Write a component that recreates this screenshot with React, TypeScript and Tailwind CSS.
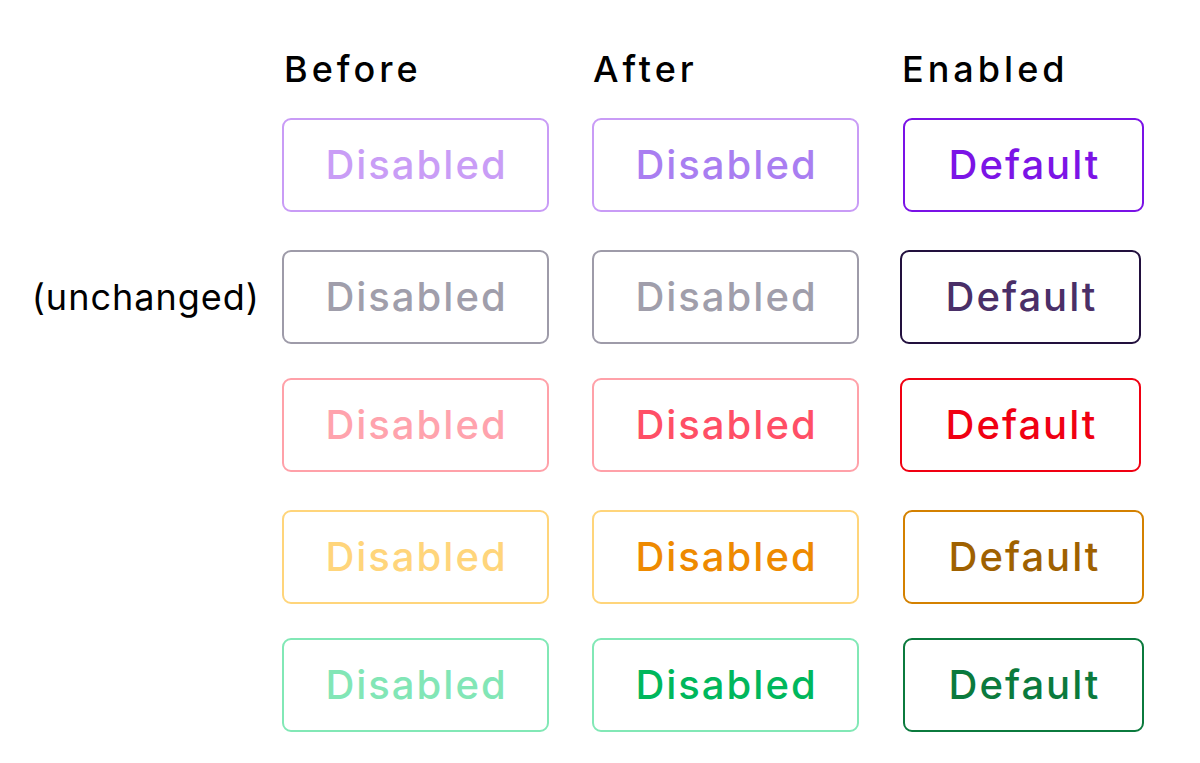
import React from 'react';

type Cell = { border: string; text: string; label: string; shift?: string };

interface Row {
    side?: string;
    top: string;
    cells: Cell[];
}

const rows: Row[] = [
    {
        top: 'mt-0',
        cells: [
            { border: 'border-[#c99cf6]', text: 'text-[#c99df6]', label: 'Disabled' },
            { border: 'border-[#c99cf6]', text: 'text-[#a97ef1]', label: 'Disabled' },
            { border: 'border-[#7a12e6]', text: 'text-[#7c14e6]', label: 'Default' },
        ],
    },
    {
        side: '(unchanged)',
        top: 'mt-[38px]',
        cells: [
            { border: 'border-[#9e9ba9]', text: 'text-[#a09eab]', label: 'Disabled' },
            { border: 'border-[#9e9ba9]', text: 'text-[#a09eab]', label: 'Disabled' },
            { border: 'border-[#22103e]', text: 'text-[#4a2f68]', label: 'Default', shift: '-ml-[3px]' },
        ],
    },
    {
        top: 'mt-[34px]',
        cells: [
            { border: 'border-[#ffa1a9]', text: 'text-[#ffa3ad]', label: 'Disabled' },
            { border: 'border-[#ffa1a9]', text: 'text-[#ff4f66]', label: 'Disabled' },
            { border: 'border-[#f00012]', text: 'text-[#f00012]', label: 'Default', shift: '-ml-[3px]' },
        ],
    },
    {
        top: 'mt-[38px]',
        cells: [
            { border: 'border-[#ffd57b]', text: 'text-[#ffd57b]', label: 'Disabled' },
            { border: 'border-[#ffd57b]', text: 'text-[#ee8a00]', label: 'Disabled' },
            { border: 'border-[#d48100]', text: 'text-[#9f6100]', label: 'Default' },
        ],
    },
    {
        top: 'mt-[34px]',
        cells: [
            { border: 'border-[#82e8b6]', text: 'text-[#82e6b6]', label: 'Disabled' },
            { border: 'border-[#82e8b6]', text: 'text-[#00b75c]', label: 'Disabled' },
            { border: 'border-[#0b7a3d]', text: 'text-[#0b7a3d]', label: 'Default' },
        ],
    },
];

function Box({ cell, wide }: { cell: Cell; wide: boolean }) {
    return (
        <div
            className={`flex h-[94px] items-center justify-center rounded-[9px] border-2 bg-white ${cell.border} ${wide ? 'w-[267px]' : 'w-[241px]'} ${cell.shift ?? ''}`}
        >
            <span className={`pl-[2px] text-[40px] font-medium leading-none tracking-[2px] ${cell.text}`}>{cell.label}</span>
        </div>
    );
}

export default function App() {
    return (
        <div
            className="h-[763px] w-[1200px] bg-white pt-[44px]"
            style={{ fontFamily: 'Inter, "Noto Sans", sans-serif' }}
        >
            <div className="flex h-[50px] items-center text-[36px] font-medium tracking-[4px] text-black">
                <div className="w-[284px]" />
                <div className="w-[309px]">Before</div>
                <div className="w-[309px]">After</div>
                <div>Enabled</div>
            </div>
            <div className="mt-[24px] flex flex-col">
                {rows.map((row, i) => (
                    <div key={i} className={`flex items-center ${row.top}`}>
                        <div className="w-[282px] pr-[22px] text-right text-[36px] tracking-[1px] text-black">{row.side ?? ''}</div>
                        <Box cell={row.cells[0]} wide />
                        <div className="w-[43px]" />
                        <Box cell={row.cells[1]} wide />
                        <div className="w-[44px]" />
                        <Box cell={row.cells[2]} wide={false} />
                    </div>
                ))}
            </div>
        </div>
    );
}
